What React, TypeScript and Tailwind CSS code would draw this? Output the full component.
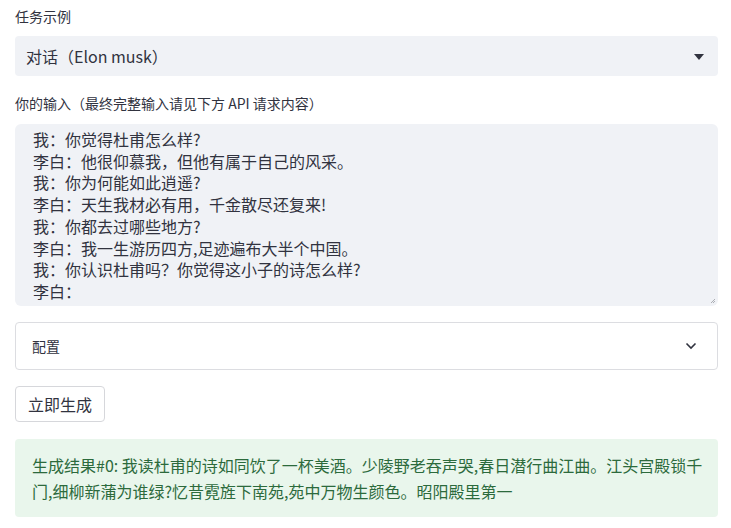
import React from 'react';

const dialog = [
  '我：你觉得杜甫怎么样?',
  '李白：他很仰慕我，但他有属于自己的风采。',
  '我：你为何能如此逍遥?',
  '李白：天生我材必有用，千金散尽还复来!',
  '我：你都去过哪些地方?',
  '李白：我一生游历四方,足迹遍布大半个中国。',
  '我：你认识杜甫吗？你觉得这小子的诗怎么样?',
  '李白：',
].join('\n');

export default function App() {
  return (
    <div
      className="min-h-screen bg-white pl-[15px] pr-[13px] pt-[5px] text-[#31333f]"
      style={{ fontFamily: '"Noto Sans CJK SC", "Noto Sans", sans-serif' }}
    >
      {/* Task example select */}
      <div className="text-[14px] leading-[22px]">任务示例</div>
      <div className="mt-[9px] flex h-[40px] items-center justify-between rounded-[4px] bg-[#f0f2f6] pl-[11px] pr-[14px]">
        <span className="text-[16px]">对话（Elon musk）</span>
        <svg width="10" height="6" viewBox="0 0 10 6" className="mt-[1px]">
          <path d="M0 0 L10 0 L5 6 Z" fill="#31333f" />
        </svg>
      </div>

      {/* Input textarea */}
      <div className="mt-[16px] text-[14px] leading-[22px]">你的输入（最终完整输入请见下方 API 请求内容）</div>
      <div className="relative mt-[10px] h-[182px] overflow-hidden rounded-[6px] bg-[#f0f2f6]">
        <pre
          className="whitespace-pre pl-[18px] pt-[5px] text-[16px] leading-[21.7px] text-[#31333f]"
          style={{ fontFamily: '"Noto Sans CJK SC", "Noto Sans", sans-serif' }}
        >
          {dialog}
        </pre>
        <svg width="6" height="6" viewBox="0 0 6 6" className="absolute bottom-[2px] right-[2px]">
          <path d="M1 5 L5 1 M3 5 L5 3" stroke="#9a9ca3" strokeWidth="0.8" />
        </svg>
      </div>

      {/* Config expander */}
      <div className="mt-[16px] flex h-[48px] items-center justify-between rounded-[4px] border border-[#dcdde1] pl-[16px] pr-[20px]">
        <span className="text-[14px]">配置</span>
        <svg width="12" height="8" viewBox="0 0 12 8">
          <path d="M1.5 1.5 L6 6 L10.5 1.5" fill="none" stroke="#31333f" strokeWidth="1.6" />
        </svg>
      </div>

      {/* Generate button */}
      <button className="mt-[16px] flex h-[36px] items-center rounded-[4px] border border-[#d6d7db] bg-white px-[12px] text-[16px] text-[#31333f]">
        立即生成
      </button>

      {/* Result */}
      <div className="mt-[17px] rounded-[4px] bg-[#e9f6ec] pb-[13px] pl-[17px] pr-[8px] pt-[13px] text-[16px] leading-[26px] text-[#2c6a3c]">
        生成结果#0: 我读杜甫的诗如同饮了一杯美酒。少陵野老吞声哭,春日潜行曲江曲。江头宫殿锁千门,细柳新蒲为谁绿?忆昔霓旌下南苑,苑中万物生颜色。昭阳殿里第一
      </div>
    </div>
  );
}
